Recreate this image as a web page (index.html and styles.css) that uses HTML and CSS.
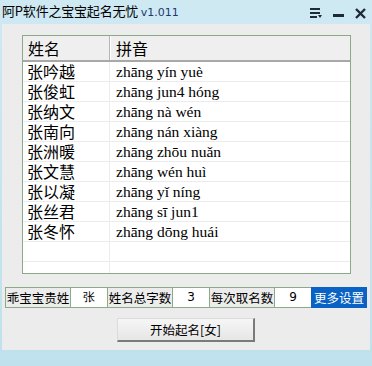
FILE: index.html
```html
<!DOCTYPE html>
<html>
<head>
<meta charset="utf-8">
<link rel="stylesheet" href="styles.css">
</head>
<body>
<div class="win">
  <div class="titlebar">
    <div class="title">阿P软件之宝宝起名无忧 <span class="ver">v1.011</span></div>
    <div class="ctrls">
      <svg class="ic" width="12" height="10" viewBox="0 0 12 10"><rect x="0" y="0" width="10" height="2" fill="#1e2a36"/><rect x="0" y="4" width="10" height="2" fill="#1e2a36"/><rect x="0" y="8" width="7" height="2" fill="#1e2a36"/><polygon points="8,7 12,7 10,10" fill="#1e2a36"/></svg>
      <svg class="ic" width="11" height="10" viewBox="0 0 11 10"><rect x="0" y="6" width="11" height="3" fill="#1e2a36"/></svg>
      <svg class="ic" width="11" height="11" viewBox="0 0 11 11"><path d="M1 1 L10 10 M10 1 L1 10" stroke="#1e2a36" stroke-width="2.4"/></svg>
    </div>
  </div>
  <div class="client">
    <div class="list">
      <div class="row head"><div class="c1">姓名</div><div class="c2">拼音</div></div>
      <div class="row"><div class="c1">张吟越</div><div class="c2">zhāng yín yuè</div></div>
      <div class="row"><div class="c1">张俊虹</div><div class="c2">zhāng jun4 hóng</div></div>
      <div class="row"><div class="c1">张纳文</div><div class="c2">zhāng nà wén</div></div>
      <div class="row"><div class="c1">张南向</div><div class="c2">zhāng nán xiàng</div></div>
      <div class="row"><div class="c1">张洲暖</div><div class="c2">zhāng zhōu nuǎn</div></div>
      <div class="row"><div class="c1">张文慧</div><div class="c2">zhāng wén huì</div></div>
      <div class="row"><div class="c1">张以凝</div><div class="c2">zhāng yǐ níng</div></div>
      <div class="row"><div class="c1">张丝君</div><div class="c2">zhāng sī jun1</div></div>
      <div class="row"><div class="c1">张冬怀</div><div class="c2">zhāng dōng huái</div></div>
      <div class="row"><div class="c1"></div><div class="c2"></div></div>
      <div class="row"><div class="c1"></div><div class="c2"></div></div>
    </div>
    <div class="opts">
      <div class="cell lbl w65">乖宝宝贵姓</div>
      <div class="cell val w37">张</div>
      <div class="cell lbl w65">姓名总字数</div>
      <div class="cell val w37">3</div>
      <div class="cell lbl w65">每次取名数</div>
      <div class="cell val w37">9</div>
      <div class="cell more">更多设置</div>
    </div>
    <div class="btnrow"><div class="btn">开始起名[女]</div></div>
  </div>
</div>
</body>
</html>
```

FILE: styles.css
```css
html, body { margin: 0; padding: 0; }
body {
  width: 372px;
  height: 366px;
  overflow: hidden;
  background: linear-gradient(#cfe9f3, #c3e4ef 60%, #bfe1ed);
  font-family: "Noto Sans CJK SC", "DejaVu Sans", sans-serif;
}
.win { width: 372px; height: 366px; display: flex; flex-direction: column; }
.titlebar {
  height: 24px;
  display: flex;
  align-items: center;
  justify-content: space-between;
  padding: 0 6px 0 2px;
  box-sizing: border-box;
}
.title { font-size: 13px; color: #000; line-height: 24px; letter-spacing: -0.2px; }
.ver { font-family: "DejaVu Sans", sans-serif; font-size: 11px; color: #1c3a6e; letter-spacing: 0; }
.ctrls { display: flex; align-items: center; gap: 11px; padding-top: 2px; }
.ic { display: block; }
.client {
  margin: 0 2px;
  height: 326px;
  background: #ececec;
  display: flex;
  flex-direction: column;
}
.list {
  margin: 11px 0 0 20px;
  width: 329px;
  height: 239px;
  box-sizing: border-box;
  border: 1px solid #8aab86;
  background: #fff;
  overflow: hidden;
}
.row {
  display: flex;
  height: 20px;
  border-bottom: 1px solid #ececec;
  box-sizing: border-box;
}
.row.head {
  height: 26px;
  background: #efefef;
  border-bottom: 2px solid #a8a8a8;
}
.c1 {
  width: 87px;
  box-sizing: border-box;
  border-right: 1px solid #ececec;
  padding-left: 4px;
  font-size: 16px;
  line-height: 19px;
  color: #000;
}
.c2 {
  flex: 1;
  padding-left: 6px;
  font-family: "Liberation Serif", serif;
  font-size: 15.5px;
  line-height: 19px;
  color: #000;
}
.head .c1 { border-right: 1px solid #b5b5b5; line-height: 24px; padding-left: 5px; box-shadow: 1px 0 0 #fff; }
.head .c2 { font-family: "Noto Sans CJK SC", sans-serif; font-size: 16px; line-height: 24px; }
.opts {
  display: flex;
  margin: 13px 0 0 3px;
  height: 21px;
}
.cell {
  box-sizing: border-box;
  height: 21px;
  border: 1px solid #8aab86;
  margin-left: -1px;
  font-size: 12.5px;
  line-height: 19px;
  text-align: center;
  color: #000;
}
.cell:first-child { margin-left: 0; }
.lbl { background: #ececec; }
.val { background: #fff; }
.w65 { width: 66px; }
.w37 { width: 38px; }
.val { font-family: "DejaVu Sans", sans-serif; font-size: 12px; }
.more { width: 56px; background: #0a63c4; color: #fff; border-color: #0a63c4; }
.btnrow { margin: 10px 0 0 115px; }
.btn {
  width: 138px;
  height: 24px;
  box-sizing: border-box;
  background: linear-gradient(#f6f6f6, #e6e6e6);
  border-top: 1px solid #dcdcdc;
  border-left: 1px solid #dcdcdc;
  border-right: 2px solid #7a7a7a;
  border-bottom: 2px solid #7a7a7a;
  font-size: 12.5px;
  line-height: 21px;
  text-align: center;
  color: #000;
}
```
